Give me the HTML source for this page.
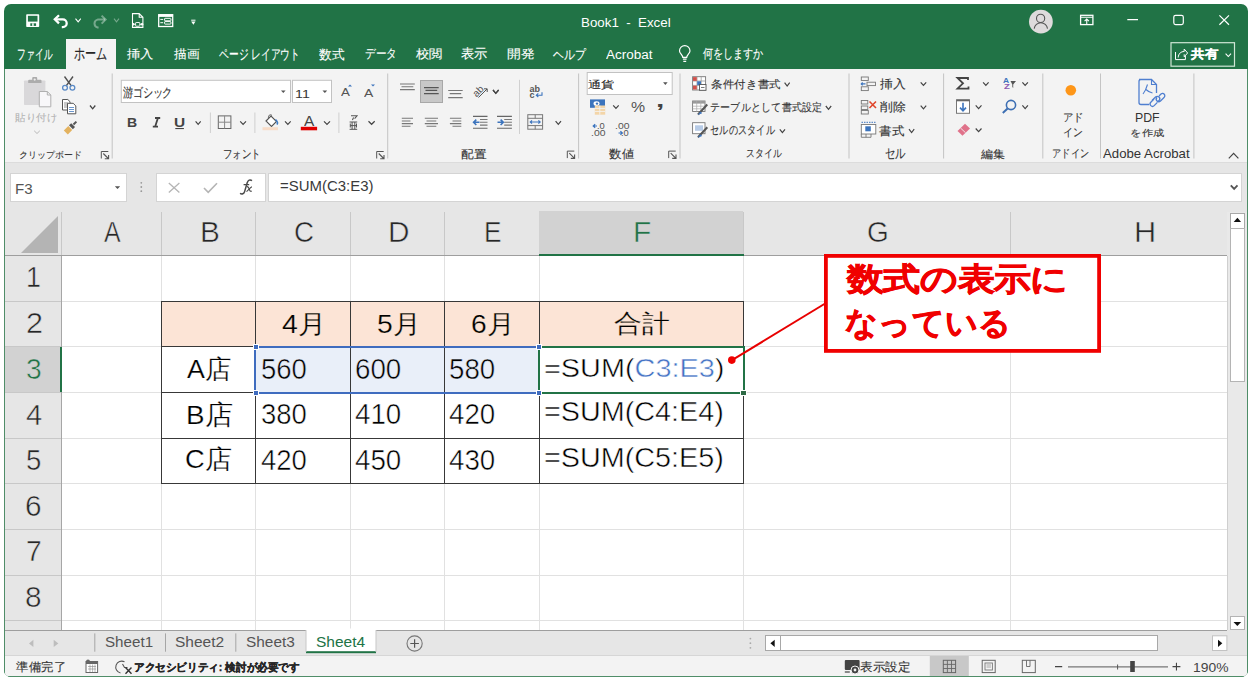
<!DOCTYPE html>
<html><head><meta charset="utf-8">
<style>
*{margin:0;padding:0;box-sizing:border-box}
html,body{width:1252px;height:682px;overflow:hidden;background:#fff;font-family:"Liberation Sans",sans-serif}
.a{position:absolute}
.t{position:absolute;white-space:nowrap;line-height:1}
#win{position:absolute;left:4px;top:4px;width:1244px;height:673px;border-radius:7px;overflow:hidden;background:#217346}
#c{position:absolute;left:-4px;top:-4px;width:1252px;height:682px}
svg{position:absolute;overflow:visible}
</style></head><body>
<div id="win"><div id="c">
<div class="t" style="left:581.47px;top:15.96px;font-size:13px;color:#fff;font-weight:400;transform:scale(1.0256,1.0222);transform-origin:0 0;">Book1&nbsp; -&nbsp; Excel</div>
<div class="a" style="left:66px;top:39px;width:50px;height:30px;background:#f3f3f3;"></div>
<div class="t" style="left:16.66px;top:47.02px;font-size:12px;color:#fff;font-weight:400;transform:scale(0.7362,1.1800);transform-origin:0 0;-webkit-text-stroke:0.12px #fff;">ファイル</div>
<div class="t" style="left:74.09px;top:45.58px;font-size:12px;color:#262626;font-weight:400;transform:scale(0.9118,1.3111);transform-origin:0 0;-webkit-text-stroke:0.12px #262626;">ホーム</div>
<div class="t" style="left:127.00px;top:48.20px;font-size:12px;color:#fff;font-weight:400;transform:scale(1.0870,0.9833);transform-origin:0 0;-webkit-text-stroke:0.12px #fff;">挿入</div>
<div class="t" style="left:174.00px;top:48.20px;font-size:12px;color:#fff;font-weight:400;transform:scale(1.0435,0.9833);transform-origin:0 0;-webkit-text-stroke:0.12px #fff;">描画</div>
<div class="t" style="left:219.18px;top:47.02px;font-size:12px;color:#fff;font-weight:400;transform:scale(0.8158,1.1800);transform-origin:0 0;-webkit-text-stroke:0.12px #fff;">ページ レイアウト</div>
<div class="t" style="left:319.00px;top:48.20px;font-size:12px;color:#fff;font-weight:400;transform:scale(1.0417,1.0727);transform-origin:0 0;-webkit-text-stroke:0.12px #fff;">数式</div>
<div class="t" style="left:365.12px;top:47.13px;font-size:12px;color:#fff;font-weight:400;transform:scale(0.8788,1.0727);transform-origin:0 0;-webkit-text-stroke:0.12px #fff;">データ</div>
<div class="t" style="left:416.00px;top:48.20px;font-size:12px;color:#fff;font-weight:400;transform:scale(1.0870,0.9833);transform-origin:0 0;-webkit-text-stroke:0.12px #fff;">校閲</div>
<div class="t" style="left:460.91px;top:47.13px;font-size:12px;color:#fff;font-weight:400;transform:scale(1.0870,1.0727);transform-origin:0 0;-webkit-text-stroke:0.12px #fff;">表示</div>
<div class="t" style="left:507.36px;top:48.20px;font-size:12px;color:#fff;font-weight:400;transform:scale(1.1364,0.9833);transform-origin:0 0;-webkit-text-stroke:0.12px #fff;">開発</div>
<div class="t" style="left:553.10px;top:48.20px;font-size:12px;color:#fff;font-weight:400;transform:scale(0.8971,1.0727);transform-origin:0 0;-webkit-text-stroke:0.12px #fff;">ヘルプ</div>
<div class="t" style="left:605.50px;top:48.60px;font-size:12px;color:#fff;font-weight:400;transform:scale(1.1244,1.0000);transform-origin:0 0;">Acrobat</div>
<div class="t" style="left:703.00px;top:47.13px;font-size:12px;color:#fff;font-weight:400;transform:scale(0.8333,1.0727);transform-origin:0 0;-webkit-text-stroke:0.12px #fff;">何をしますか</div>
<div class="a" style="left:5px;top:69px;width:1242px;height:93px;background:#f3f3f3;"></div>
<div class="a" style="left:5px;top:162px;width:1242px;height:468px;background:#e6e6e6;"></div>
<div class="a" style="left:5px;top:162px;width:1242px;height:1px;background:#dcdcdc;"></div>
<div class="a" style="left:10px;top:173px;width:117px;height:29px;background:#fff;border:1px solid #d4d4d4"></div>
<div class="a" style="left:156px;top:173px;width:110px;height:29px;background:#fff;border:1px solid #d4d4d4"></div>
<div class="a" style="left:268px;top:173px;width:974px;height:29px;background:#fff;border:1px solid #d4d4d4"></div>
<div class="t" style="left:15.12px;top:182.00px;font-size:14px;color:#555;font-weight:400;transform:scale(1.0800,1.0000);transform-origin:0 0;">F3</div>
<div class="t" style="left:280.13px;top:178.80px;font-size:14px;color:#3a3a3a;font-weight:400;transform:scale(1.0674,1.0000);transform-origin:0 0;">=SUM(C3:E3)</div>
<div class="a" style="left:62px;top:256px;width:1165px;height:374px;background:#fff;"></div>
<div class="a" style="left:161px;top:256px;width:1px;height:374px;background:#e1e1e1;"></div>
<div class="a" style="left:255px;top:256px;width:1px;height:374px;background:#e1e1e1;"></div>
<div class="a" style="left:350px;top:256px;width:1px;height:374px;background:#e1e1e1;"></div>
<div class="a" style="left:444px;top:256px;width:1px;height:374px;background:#e1e1e1;"></div>
<div class="a" style="left:539px;top:256px;width:1px;height:374px;background:#e1e1e1;"></div>
<div class="a" style="left:743px;top:256px;width:1px;height:374px;background:#e1e1e1;"></div>
<div class="a" style="left:1010px;top:256px;width:1px;height:374px;background:#e1e1e1;"></div>
<div class="a" style="left:62px;top:301px;width:1165px;height:1px;background:#e1e1e1;"></div>
<div class="a" style="left:62px;top:346px;width:1165px;height:1px;background:#e1e1e1;"></div>
<div class="a" style="left:62px;top:392px;width:1165px;height:1px;background:#e1e1e1;"></div>
<div class="a" style="left:62px;top:438px;width:1165px;height:1px;background:#e1e1e1;"></div>
<div class="a" style="left:62px;top:483px;width:1165px;height:1px;background:#e1e1e1;"></div>
<div class="a" style="left:62px;top:529px;width:1165px;height:1px;background:#e1e1e1;"></div>
<div class="a" style="left:62px;top:575px;width:1165px;height:1px;background:#e1e1e1;"></div>
<div class="a" style="left:62px;top:620px;width:1165px;height:1px;background:#e1e1e1;"></div>
<div class="a" style="left:5px;top:212px;width:1222px;height:44px;background:#e6e6e6;"></div>
<div class="a" style="left:5px;top:256px;width:56px;height:374px;background:#e6e6e6;"></div>
<div class="a" style="left:61px;top:212px;width:1px;height:43px;background:#c8c8c8;"></div>
<div class="a" style="left:61px;top:255px;width:1px;height:375px;background:#a6a6a6;"></div>
<div class="a" style="left:5px;top:255px;width:1222px;height:1px;background:#9e9e9e;"></div>
<div class="a" style="left:161px;top:212px;width:1px;height:43px;background:#c8c8c8;"></div>
<div class="a" style="left:255px;top:212px;width:1px;height:43px;background:#c8c8c8;"></div>
<div class="a" style="left:350px;top:212px;width:1px;height:43px;background:#c8c8c8;"></div>
<div class="a" style="left:444px;top:212px;width:1px;height:43px;background:#c8c8c8;"></div>
<div class="a" style="left:539px;top:212px;width:1px;height:43px;background:#c8c8c8;"></div>
<div class="a" style="left:743px;top:212px;width:1px;height:43px;background:#c8c8c8;"></div>
<div class="a" style="left:1010px;top:212px;width:1px;height:43px;background:#c8c8c8;"></div>
<div class="a" style="left:5px;top:301px;width:56px;height:1px;background:#c8c8c8;"></div>
<div class="a" style="left:5px;top:346px;width:56px;height:1px;background:#c8c8c8;"></div>
<div class="a" style="left:5px;top:392px;width:56px;height:1px;background:#c8c8c8;"></div>
<div class="a" style="left:5px;top:438px;width:56px;height:1px;background:#c8c8c8;"></div>
<div class="a" style="left:5px;top:483px;width:56px;height:1px;background:#c8c8c8;"></div>
<div class="a" style="left:5px;top:529px;width:56px;height:1px;background:#c8c8c8;"></div>
<div class="a" style="left:5px;top:575px;width:56px;height:1px;background:#c8c8c8;"></div>
<div class="a" style="left:5px;top:620px;width:56px;height:1px;background:#c8c8c8;"></div>
<svg style="left:0;top:0" width="1" height="1"><polygon points="21,253 58,216 58,253" fill="#b4b4b4"/></svg>
<div class="a" style="left:539px;top:211px;width:204px;height:44px;background:#d2d2d2;"></div>
<div class="a" style="left:539px;top:254px;width:205px;height:2px;background:#217346;"></div>
<div class="a" style="left:5px;top:347px;width:56px;height:45px;background:#d2d2d2;"></div>
<div class="a" style="left:60px;top:347px;width:2px;height:45px;background:#217346;"></div>
<div class="t" style="left:103.80px;top:218.35px;font-size:28px;color:#262626;font-weight:400;transform:scale(0.8895,1.0632);transform-origin:0 0;-webkit-text-stroke:0.5px #e6e6e6">A</div>
<div class="t" style="left:199.87px;top:218.35px;font-size:28px;color:#262626;font-weight:400;transform:scale(1.0667,1.0632);transform-origin:0 0;-webkit-text-stroke:0.5px #e6e6e6">B</div>
<div class="t" style="left:294.01px;top:218.35px;font-size:28px;color:#262626;font-weight:400;transform:scale(0.9889,1.0632);transform-origin:0 0;-webkit-text-stroke:0.5px #e6e6e6">C</div>
<div class="t" style="left:387.57px;top:218.35px;font-size:28px;color:#262626;font-weight:400;transform:scale(1.0647,1.0632);transform-origin:0 0;-webkit-text-stroke:0.5px #e6e6e6">D</div>
<div class="t" style="left:483.62px;top:218.35px;font-size:28px;color:#262626;font-weight:400;transform:scale(0.9375,1.0632);transform-origin:0 0;-webkit-text-stroke:0.5px #e6e6e6">E</div>
<div class="t" style="left:633.16px;top:218.35px;font-size:28px;color:#217346;font-weight:400;transform:scale(1.0714,1.0632);transform-origin:0 0;-webkit-text-stroke:0.5px #d2d2d2">F</div>
<div class="t" style="left:867.00px;top:218.35px;font-size:28px;color:#262626;font-weight:400;transform:scale(1.0000,1.0632);transform-origin:0 0;-webkit-text-stroke:0.5px #e6e6e6">G</div>
<div class="t" style="left:1133.80px;top:218.35px;font-size:28px;color:#262626;font-weight:400;transform:scale(1.1000,1.0632);transform-origin:0 0;-webkit-text-stroke:0.5px #e6e6e6">H</div>
<div class="t" style="left:26.28px;top:262.43px;font-size:28px;color:#262626;font-weight:400;transform:scale(0.9583,1.0789);transform-origin:0 0;-webkit-text-stroke:0.5px #e6e6e6">1</div>
<div class="t" style="left:25.81px;top:308.33px;font-size:28px;color:#262626;font-weight:400;transform:scale(1.0923,1.0789);transform-origin:0 0;-webkit-text-stroke:0.5px #e6e6e6">2</div>
<div class="t" style="left:25.89px;top:353.73px;font-size:28px;color:#217346;font-weight:400;transform:scale(1.0071,1.0789);transform-origin:0 0;-webkit-text-stroke:0.5px #d2d2d2">3</div>
<div class="t" style="left:25.86px;top:399.83px;font-size:28px;color:#262626;font-weight:400;transform:scale(1.0429,1.0789);transform-origin:0 0;-webkit-text-stroke:0.5px #e6e6e6">4</div>
<div class="t" style="left:25.91px;top:444.63px;font-size:28px;color:#262626;font-weight:400;transform:scale(0.9857,1.0789);transform-origin:0 0;-webkit-text-stroke:0.5px #e6e6e6">5</div>
<div class="t" style="left:25.34px;top:490.93px;font-size:28px;color:#262626;font-weight:400;transform:scale(1.0643,1.0789);transform-origin:0 0;-webkit-text-stroke:0.5px #e6e6e6">6</div>
<div class="t" style="left:26.09px;top:536.43px;font-size:28px;color:#262626;font-weight:400;transform:scale(1.0077,1.0789);transform-origin:0 0;-webkit-text-stroke:0.5px #e6e6e6">7</div>
<div class="t" style="left:25.34px;top:582.33px;font-size:28px;color:#262626;font-weight:400;transform:scale(1.0643,1.0789);transform-origin:0 0;-webkit-text-stroke:0.5px #e6e6e6">8</div>
<div class="a" style="left:162px;top:302px;width:581px;height:44px;background:#fce4d6;"></div>
<div class="a" style="left:256px;top:347px;width:283px;height:45px;background:#e9eff9;"></div>
<div class="a" style="left:161px;top:301px;width:1px;height:183px;background:#383838;"></div>
<div class="a" style="left:255px;top:301px;width:1px;height:183px;background:#383838;"></div>
<div class="a" style="left:350px;top:301px;width:1px;height:183px;background:#383838;"></div>
<div class="a" style="left:444px;top:301px;width:1px;height:183px;background:#383838;"></div>
<div class="a" style="left:539px;top:301px;width:1px;height:183px;background:#383838;"></div>
<div class="a" style="left:743px;top:301px;width:1px;height:183px;background:#383838;"></div>
<div class="a" style="left:161px;top:301px;width:583px;height:1px;background:#383838;"></div>
<div class="a" style="left:161px;top:346px;width:583px;height:1px;background:#383838;"></div>
<div class="a" style="left:161px;top:392px;width:583px;height:1px;background:#383838;"></div>
<div class="a" style="left:161px;top:438px;width:583px;height:1px;background:#383838;"></div>
<div class="a" style="left:161px;top:483px;width:583px;height:1px;background:#383838;"></div>
<div class="a" style="left:254px;top:346px;width:285px;height:2px;background:#3f6cbf;"></div>
<div class="a" style="left:254px;top:392px;width:285px;height:2px;background:#3f6cbf;"></div>
<div class="a" style="left:254px;top:346px;width:2px;height:48px;background:#3f6cbf;"></div>
<div class="a" style="left:538px;top:346px;width:206.5px;height:2px;background:#217346;"></div>
<div class="a" style="left:538px;top:392px;width:206.5px;height:2px;background:#217346;"></div>
<div class="a" style="left:538px;top:346px;width:2px;height:48px;background:#217346;"></div>
<div class="a" style="left:742.5px;top:346px;width:2px;height:48px;background:#217346;"></div>
<div class="a" style="left:254px;top:345px;width:4px;height:4px;background:#3f6cbf;outline:0.8px solid #fff"></div>
<div class="a" style="left:254px;top:390.5px;width:4px;height:4px;background:#3f6cbf;outline:0.8px solid #fff"></div>
<div class="a" style="left:537px;top:345px;width:4px;height:4px;background:#3f6cbf;outline:0.8px solid #fff"></div>
<div class="a" style="left:537px;top:390.5px;width:4px;height:4px;background:#3f6cbf;outline:0.8px solid #fff"></div>
<div class="a" style="left:741px;top:391px;width:4.5px;height:3.5px;background:#2d6a45;outline:0.8px solid #fff"></div>
<div class="t" style="left:281.98px;top:311.01px;font-size:28px;color:#000;font-weight:400;transform:scale(1.0189,0.9400);transform-origin:0 0;-webkit-text-stroke:0.25px #fce4d6">4月</div>
<div class="t" style="left:376.89px;top:311.01px;font-size:28px;color:#000;font-weight:400;transform:scale(1.0108,0.9400);transform-origin:0 0;-webkit-text-stroke:0.25px #fce4d6">5月</div>
<div class="t" style="left:471.29px;top:311.01px;font-size:28px;color:#000;font-weight:400;transform:scale(1.0054,0.9400);transform-origin:0 0;-webkit-text-stroke:0.25px #fce4d6">6月</div>
<div class="t" style="left:614.00px;top:310.90px;font-size:28px;color:#000;font-weight:400;transform:scale(1.0000,0.8963);transform-origin:0 0;-webkit-text-stroke:0.25px #fce4d6">合計</div>
<div class="t" style="left:187.20px;top:356.25px;font-size:28px;color:#000;font-weight:400;transform:scale(0.9587,0.9423);transform-origin:0 0;-webkit-text-stroke:0.25px #fff">A店</div>
<div class="t" style="left:185.51px;top:401.95px;font-size:28px;color:#000;font-weight:400;transform:scale(0.9955,0.9500);transform-origin:0 0;-webkit-text-stroke:0.25px #fff">B店</div>
<div class="t" style="left:185.42px;top:447.45px;font-size:28px;color:#000;font-weight:400;transform:scale(0.9761,0.9346);transform-origin:0 0;-webkit-text-stroke:0.25px #fff">C店</div>
<div class="t" style="left:260.82px;top:354.63px;font-size:28px;color:#000;font-weight:400;transform:scale(0.9822,1.0421);transform-origin:0 0;-webkit-text-stroke:0.5px #e9eff9">560</div>
<div class="t" style="left:354.81px;top:354.63px;font-size:28px;color:#000;font-weight:400;transform:scale(0.9911,1.0421);transform-origin:0 0;-webkit-text-stroke:0.5px #e9eff9">600</div>
<div class="t" style="left:449.31px;top:354.63px;font-size:28px;color:#000;font-weight:400;transform:scale(0.9889,1.0421);transform-origin:0 0;-webkit-text-stroke:0.5px #e9eff9">580</div>
<div class="t" style="left:260.82px;top:400.13px;font-size:28px;color:#000;font-weight:400;transform:scale(0.9822,1.0421);transform-origin:0 0;-webkit-text-stroke:0.5px #fff">380</div>
<div class="t" style="left:354.81px;top:400.13px;font-size:28px;color:#000;font-weight:400;transform:scale(0.9911,1.0421);transform-origin:0 0;-webkit-text-stroke:0.5px #fff">410</div>
<div class="t" style="left:449.31px;top:400.13px;font-size:28px;color:#000;font-weight:400;transform:scale(0.9889,1.0421);transform-origin:0 0;-webkit-text-stroke:0.5px #fff">420</div>
<div class="t" style="left:260.82px;top:445.63px;font-size:28px;color:#000;font-weight:400;transform:scale(0.9822,1.0421);transform-origin:0 0;-webkit-text-stroke:0.5px #fff">420</div>
<div class="t" style="left:354.81px;top:445.63px;font-size:28px;color:#000;font-weight:400;transform:scale(0.9911,1.0421);transform-origin:0 0;-webkit-text-stroke:0.5px #fff">450</div>
<div class="t" style="left:449.31px;top:445.63px;font-size:28px;color:#000;font-weight:400;transform:scale(0.9889,1.0421);transform-origin:0 0;-webkit-text-stroke:0.5px #fff">430</div>
<div class="t" style="left:544.47px;top:356.16px;font-size:28px;color:#000;font-weight:400;transform:scale(1.0301,0.8962);transform-origin:0 0;-webkit-text-stroke:0.5px #fff">=SUM(<span style="color:#4472c4">C3:E3</span>)</div>
<div class="t" style="left:544.47px;top:398.35px;font-size:28px;color:#000;font-weight:400;transform:scale(1.0272,1.0154);transform-origin:0 0;-webkit-text-stroke:0.5px #fff">=SUM(C4:E4)</div>
<div class="t" style="left:544.47px;top:443.95px;font-size:28px;color:#000;font-weight:400;transform:scale(1.0272,1.0154);transform-origin:0 0;-webkit-text-stroke:0.5px #fff">=SUM(C5:E5)</div>
<svg style="left:0;top:0" width="1" height="1"><line x1="826" y1="303" x2="732" y2="360.2" stroke="#e80000" stroke-width="2"/><circle cx="731.8" cy="360.1" r="3.8" fill="#f00000"/></svg>
<svg style="left:0;top:0" width="1252" height="682"><rect x="825.9" y="255.9" width="273.2" height="95" fill="#fff" stroke="#f00000" stroke-width="3.8"/></svg>
<div class="t" style="left:846.50px;top:263.95px;font-size:30px;color:#f00000;font-weight:700;transform:scale(1.2151,1.0500);transform-origin:0 0;-webkit-text-stroke:0.6px #f00000">数式の表示に</div>
<div class="t" style="left:845.43px;top:306.56px;font-size:30px;color:#f00000;font-weight:700;transform:scale(1.0733,1.0690);transform-origin:0 0;-webkit-text-stroke:0.6px #f00000">なっている</div>
<div class="a" style="left:1227px;top:212px;width:20px;height:418px;background:#e9e9e9;"></div>
<div class="a" style="left:1229.5px;top:213px;width:15.2px;height:15.5px;background:#fff;border:1px solid #a8a8a8"></div>
<div class="a" style="left:1229.5px;top:227.5px;width:15.2px;height:154.5px;background:#fff;border:1px solid #b4b4b4"></div>
<div class="a" style="left:1229.5px;top:615.7px;width:15.2px;height:14.8px;background:#fff;border:1px solid #b4b4b4"></div>
<div class="a" style="left:5px;top:630px;width:1242px;height:25px;background:#e6e6e6;"></div>
<div class="a" style="left:5px;top:630px;width:1222px;height:1px;background:#9e9e9e;"></div>
<div class="a" style="left:5px;top:655px;width:1242px;height:21px;background:#f3f3f3;"></div>
<div class="a" style="left:5px;top:655px;width:1242px;height:1px;background:#d6d6d6;"></div>
<svg style="left:0;top:0" width="1252" height="682"><rect x="26.2" y="14.2" width="13" height="12.8" rx="0.8" fill="#fff"/><rect x="27.9" y="15.8" width="9.6" height="5.8" fill="#217346"/><rect x="30.3" y="23.3" width="5.8" height="2.6" fill="#217346"/><rect x="32.2" y="23.3" width="1.5" height="2.6" fill="#fff"/><path d="M55.4 19.3 H62.8 A3.9 3.9 0 0 1 62.8 27.1 H61.8" fill="none" stroke="#fff" stroke-width="2.3"/><path d="M59 15.2 L54.8 19.3 L59 23.4" fill="none" stroke="#fff" stroke-width="2.3"/><polyline points="75.5,18.6 78.15,21.8 80.8,18.6" fill="none" stroke="#fff" stroke-width="1.1"/><path d="M105 19.6 H97.6 A4 4 0 0 0 97.6 27.4 H98.6" fill="none" stroke="rgba(255,255,255,0.38)" stroke-width="2"/><path d="M101.6 15.6 L105.6 19.6 L101.6 23.6" fill="none" stroke="rgba(255,255,255,0.38)" stroke-width="2"/><polyline points="114,18.6 116.5,21.8 119,18.6" fill="none" stroke="rgba(255,255,255,0.38)" stroke-width="1.1"/><path d="M132.5 27.4 V13.6 H139.2 L142.9 17.3 V27.4 Z M139.2 13.6 V17.3 H142.9" fill="none" stroke="#fff" stroke-width="1.1"/><circle cx="133.4" cy="24.3" r="1.25" fill="#fff"/><circle cx="142" cy="24.3" r="1.25" fill="#fff"/><path d="M134.5 24.3 H135.6 M139.8 24.3 H141" stroke="#fff" stroke-width="0.9"/><rect x="135.6" y="22.5" width="4.2" height="3.7" rx="0.6" fill="none" stroke="#fff" stroke-width="0.9"/><rect x="158.7" y="14.7" width="14" height="11.8" fill="none" stroke="#fff" stroke-width="1.3"/><rect x="158.7" y="14.5" width="14" height="2.4" fill="#fff"/><path d="M160.3 19.4 H163.2 M160.3 22.7 H163.2" stroke="#fff" stroke-width="1"/><rect x="164.6" y="18.3" width="6.3" height="2.5" rx="0.5" fill="none" stroke="#fff" stroke-width="1"/><rect x="164.6" y="21.6" width="6.3" height="2.5" rx="0.5" fill="none" stroke="#fff" stroke-width="1"/><path d="M191.2 20.2 H195.5" stroke="#fff" stroke-width="1"/><polygon points="191.2,21.6 195.5,21.6 193.35,24.8" fill="#fff"/><circle cx="1040.9" cy="21.7" r="11.9" fill="#dedbdc"/><circle cx="1040.6" cy="18.4" r="4.1" fill="none" stroke="#555" stroke-width="1.1"/><path d="M1034.2 28.6 A6.7 6.7 0 0 1 1047.5 28.6" fill="none" stroke="#555" stroke-width="1.1"/><rect x="1080.6" y="15.3" width="12.3" height="9.3" fill="none" stroke="#fff" stroke-width="1.3"/><path d="M1080.6 17.3 H1092.9" stroke="#fff" stroke-width="1.1"/><path d="M1086.75 19 V24.6 M1084.6 21.1 L1086.75 19 L1088.9 21.1" fill="none" stroke="#fff" stroke-width="1.1"/><path d="M1127.3 19.6 H1138" stroke="#fff" stroke-width="1.2"/><rect x="1173.8" y="15.3" width="9.5" height="9.3" rx="1.8" fill="none" stroke="#fff" stroke-width="1.2"/><path d="M1219.4 15.4 L1229 24.8 M1229 15.4 L1219.4 24.8" stroke="#fff" stroke-width="1.2"/><rect x="1171" y="42.7" width="63.5" height="23.5" fill="none" stroke="#d0e6d6" stroke-width="1.2"/><path d="M1175.5 52 V59.6 H1185.4 V56" fill="none" stroke="#fff" stroke-width="1"/><path d="M1178.2 57.5 C1178.5 53.5 1181 51.5 1184.2 51.5 V49 L1187.6 53 L1184.2 56.8 V54.3" fill="none" stroke="#fff" stroke-width="1"/><polyline points="1225.6,53.6 1228.3,56.5 1231,53.6" fill="none" stroke="#fff" stroke-width="1.1"/></svg>
<div class="t" style="left:1191.40px;top:48.35px;font-size:13px;color:#fff;font-weight:700;transform:scale(1.0577,0.9462);transform-origin:0 0;-webkit-text-stroke:0.3px #fff">共有</div>
<svg style="left:0;top:0" width="1252" height="682"><rect x="111.7" y="73.5" width="1" height="85" fill="#c4c4c4"/><rect x="387.2" y="73.5" width="1" height="85" fill="#c4c4c4"/><rect x="578.1" y="73.5" width="1" height="85" fill="#c4c4c4"/><rect x="679.5" y="73.5" width="1" height="85" fill="#c4c4c4"/><rect x="848.5" y="73.5" width="1" height="85" fill="#c4c4c4"/><rect x="943.1" y="73.5" width="1" height="85" fill="#c4c4c4"/><rect x="1042.3" y="73.5" width="1" height="85" fill="#c4c4c4"/><rect x="1100.0" y="73.5" width="1" height="85" fill="#c4c4c4"/><rect x="1193.4" y="73.5" width="1" height="85" fill="#c4c4c4"/><rect x="209.9" y="112.5" width="1" height="20.5" fill="#d0d0d0"/><rect x="254.4" y="112.5" width="1" height="20.5" fill="#d0d0d0"/><rect x="338.4" y="112.5" width="1" height="20.5" fill="#d0d0d0"/><rect x="519" y="79.8" width="1" height="54.2" fill="#d0d0d0"/><path d="M101.3 158.5 V151.5 H108.3" fill="none" stroke="#555" stroke-width="1"/><path d="M103.3 153.5 L108.3 158.5 M108.6 155 V158.8 H104.8" fill="none" stroke="#555" stroke-width="1.1"/><path d="M376.7 158.5 V151.5 H383.7" fill="none" stroke="#555" stroke-width="1"/><path d="M378.7 153.5 L383.7 158.5 M384.0 155 V158.8 H380.2" fill="none" stroke="#555" stroke-width="1.1"/><path d="M567.3 158.1 V151.1 H574.3" fill="none" stroke="#555" stroke-width="1"/><path d="M569.3 153.1 L574.3 158.1 M574.5999999999999 154.6 V158.4 H570.8" fill="none" stroke="#555" stroke-width="1.1"/><path d="M668.7 158.1 V151.1 H675.7" fill="none" stroke="#555" stroke-width="1"/><path d="M670.7 153.1 L675.7 158.1 M676.0 154.6 V158.4 H672.2" fill="none" stroke="#555" stroke-width="1.1"/><rect x="24" y="80.5" width="21.4" height="24.5" rx="0.8" fill="#d9d8da"/><path d="M28.2 83 V80.8 Q28.2 79.8 29.2 79.8 H32.2 V78 Q32.2 77 33.2 77 H36.2 Q37.2 77 37.2 78 V79.8 H40.5 Q41.5 79.8 41.5 80.8 V83 Z" fill="#acacac"/><circle cx="34.7" cy="79.6" r="1.1" fill="#eee"/><path d="M39.3 91.5 H47.3 L50.8 95 V106.8 H39.3 Z" fill="#f8f7f9" stroke="#b0b0b0" stroke-width="1"/><path d="M47.3 91.5 V95 H50.8" fill="none" stroke="#b0b0b0" stroke-width="1"/><polyline points="34.2,130.8 37.0,133.5 39.8,130.8" fill="none" stroke="#b8b8b8" stroke-width="1"/><path d="M64.5 76.5 L71.5 86.2 M73 76.5 L66 86.2" stroke="#505050" stroke-width="1.4" fill="none"/><circle cx="65" cy="87.8" r="2.4" fill="none" stroke="#5a8ac6" stroke-width="1.3"/><circle cx="72.4" cy="87.8" r="2.4" fill="none" stroke="#5a8ac6" stroke-width="1.3"/><path d="M62.5 99.5 H67.8 L70 101.7 V110 H62.5 Z" fill="#fff" stroke="#555" stroke-width="1"/><path d="M64 103 H68 M64 105 H68 M64 107 H68" stroke="#777" stroke-width="0.8"/><path d="M67.5 103.3 H73.2 L75.8 105.9 V113.8 H67.5 Z" fill="#fff" stroke="#555" stroke-width="1"/><path d="M69 107.5 H74 M69 109.5 H74 M69 111.5 H74" stroke="#5a8ac6" stroke-width="0.9"/><polyline points="90,105.5 92.65,108.8 95.3,105.5" fill="none" stroke="#444" stroke-width="1.3"/><path d="M63.8 130.5 L68.3 126 L72.2 130 L67.8 134.6 Z" fill="#e3b25f"/><path d="M69 125.3 L71.2 123.2 L75 127 L72.9 129.2 Z" fill="#555"/><path d="M73.5 124.5 L76.4 121.6" stroke="#555" stroke-width="2"/><rect x="121.3" y="80.3" width="169.2" height="22.2" fill="#fff" stroke="#c2c2c2" stroke-width="1"/><rect x="292.5" y="80.3" width="39" height="22.2" fill="#fff" stroke="#c2c2c2" stroke-width="1"/><polygon points="281,90.4 285.6,90.4 283.3,93.1" fill="#555"/><polygon points="322.5,90.4 327.2,90.4 324.85,93.1" fill="#555"/><polyline points="195.6,121.3 198.14999999999998,124.3 200.7,121.3" fill="none" stroke="#444" stroke-width="1.2"/><rect x="218.3" y="115.9" width="12.6" height="12.6" fill="none" stroke="#666" stroke-width="1"/><path d="M224.6 115.9 V128.5 M218.3 122.2 H230.9" stroke="#888" stroke-width="1"/><polyline points="240.2,121.3 243.1,124.3 246,121.3" fill="none" stroke="#444" stroke-width="1.2"/><path d="M266 121 L271 116 L276.5 121.5 L271.5 126.5 Z" fill="#fff" stroke="#555" stroke-width="1.1"/><path d="M268.5 118.5 C268 115.5 270 113.8 272 115.5" fill="none" stroke="#555" stroke-width="1"/><path d="M275.5 119.5 C277.8 121.5 278 123.5 276.8 124.5" fill="none" stroke="#3d7cc6" stroke-width="1.6"/><rect x="262.5" y="127.2" width="15.5" height="3" fill="#f8dcc8"/><polyline points="285,121.3 287.85,124.3 290.7,121.3" fill="none" stroke="#444" stroke-width="1.2"/><rect x="300.8" y="126.8" width="16.3" height="3.5" fill="#e00000"/><polyline points="324,121.3 327.0,124.3 330,121.3" fill="none" stroke="#444" stroke-width="1.2"/><polyline points="368.5,121.3 371.6,124.3 374.7,121.3" fill="none" stroke="#444" stroke-width="1.2"/><path d="M400 84 H414.8" stroke="#777" stroke-width="1.1"/><path d="M401.5 86.8 H413.3" stroke="#777" stroke-width="1.1"/><path d="M400 89.6 H414.8" stroke="#777" stroke-width="1.1"/><rect x="420.5" y="80.5" width="22" height="22" fill="#c8c8c8" stroke="#a8a8a8" stroke-width="1"/><path d="M424 87.6 H438.7" stroke="#555" stroke-width="1.1"/><path d="M425.5 90.4 H437.2" stroke="#555" stroke-width="1.1"/><path d="M424 93.6 H438.7" stroke="#555" stroke-width="1.1"/><path d="M448.2 90.5 H462.7" stroke="#777" stroke-width="1.1"/><path d="M449.7 93.6 H461.2" stroke="#777" stroke-width="1.1"/><path d="M448.2 97.6 H462.7" stroke="#777" stroke-width="1.1"/><text x="0" y="0" transform="translate(476.5 97.5) rotate(-45)" font-family="Liberation Sans" font-size="10" fill="#555">ab</text><path d="M478.5 97.5 L487 89 M484 88.8 H487.2 V92" fill="none" stroke="#555" stroke-width="1"/><polyline points="493,90 495.8,93.4 498.6,90" fill="none" stroke="#444" stroke-width="1.2"/><path d="M401.8 118.2 H413" stroke="#777" stroke-width="1.1"/><path d="M401.8 121 H410.5" stroke="#777" stroke-width="1.1"/><path d="M401.8 123.6 H413" stroke="#777" stroke-width="1.1"/><path d="M401.8 126.3 H410.5" stroke="#777" stroke-width="1.1"/><path d="M424.8 118.2 H438" stroke="#777" stroke-width="1.1"/><path d="M426.5 121 H436.3" stroke="#777" stroke-width="1.1"/><path d="M424.8 123.6 H438" stroke="#777" stroke-width="1.1"/><path d="M426.5 126.3 H436.3" stroke="#777" stroke-width="1.1"/><path d="M449.9 118.2 H461.3" stroke="#777" stroke-width="1.1"/><path d="M452.5 121 H461.3" stroke="#777" stroke-width="1.1"/><path d="M449.9 123.6 H461.3" stroke="#777" stroke-width="1.1"/><path d="M452.5 126.3 H461.3" stroke="#777" stroke-width="1.1"/><path d="M473 116.4 H487.5" stroke="#666" stroke-width="1.1"/><path d="M473 128.2 H487.5" stroke="#666" stroke-width="1.1"/><path d="M480 119.5 H487.5" stroke="#777" stroke-width="1.1"/><path d="M480 122.3 H487.5" stroke="#777" stroke-width="1.1"/><path d="M480 125.1 H487.5" stroke="#777" stroke-width="1.1"/><path d="M479.5 122.3 H473.8 M476.3 119.6 L473.6 122.3 L476.3 125" fill="none" stroke="#3c74bd" stroke-width="1.6"/><path d="M497 116.4 H511.9" stroke="#666" stroke-width="1.1"/><path d="M497 128.2 H511.9" stroke="#666" stroke-width="1.1"/><path d="M504.2 119.5 H511.9" stroke="#777" stroke-width="1.1"/><path d="M504.2 122.3 H511.9" stroke="#777" stroke-width="1.1"/><path d="M504.2 125.1 H511.9" stroke="#777" stroke-width="1.1"/><path d="M497.5 122.3 H503.2 M500.6 119.6 L503.3 122.3 L500.6 125" fill="none" stroke="#3c74bd" stroke-width="1.6"/><polyline points="493,90 495.8,93.4 498.6,90" fill="none" stroke="#444" stroke-width="1.2"/><text x="529.6" y="91.5" font-family="Liberation Sans" font-size="9" font-weight="700" fill="#555">ab</text><text x="529.6" y="98.4" font-family="Liberation Sans" font-size="9" font-weight="700" fill="#555">c</text><path d="M542 92.2 V95.2 H536.5 M538.3 93.4 L536.3 95.2 L538.3 97" fill="none" stroke="#3c74bd" stroke-width="1.1"/><rect x="527.8" y="114.7" width="14.8" height="14.5" fill="none" stroke="#777" stroke-width="1"/><path d="M527.8 118.3 H542.6 M527.8 125.6 H542.6 M535.2 114.7 V118.3 M535.2 125.6 V129.2" stroke="#777" stroke-width="1"/><path d="M530.2 122 H540.2 M532 120.3 L530.2 122 L532 123.7 M538.4 120.3 L540.2 122 L538.4 123.7" fill="none" stroke="#3c74bd" stroke-width="1.1"/><polyline points="555.6,121.2 558.3,124.4 561,121.2" fill="none" stroke="#444" stroke-width="1.2"/><rect x="587.2" y="72.5" width="85" height="22" fill="#fff" stroke="#c2c2c2" stroke-width="1"/><polygon points="663.1,82.2 667.6,82.2 665.35,85" fill="#555"/><rect x="590" y="99.4" width="15" height="8.4" fill="#3c74bd"/><ellipse cx="596.5" cy="103.6" rx="3" ry="2.3" fill="#fff"/><circle cx="597" cy="103.6" r="1.2" fill="#3c74bd"/><rect x="594.8" y="105.5" width="10.4" height="9.2" fill="#f3d5a8"/><path d="M594.8 108.4 H605.2 M594.8 111.4 H605.2 M599.8 105.5 V114.7" stroke="#f3f3f3" stroke-width="0.9"/><polyline points="613.2,105.3 615.95,108.4 618.7,105.3" fill="none" stroke="#444" stroke-width="1.2"/><path d="M594 126 H597 M595.2 124.2 L593.2 126 L595.2 127.8" fill="none" stroke="#3c74bd" stroke-width="1.2"/><path d="M618.5 133 H621.8 M620.4 131.2 L622.4 133 L620.4 134.8" fill="none" stroke="#3c74bd" stroke-width="1.2"/><rect x="692.6" y="76.7" width="13" height="13.3" fill="#fff" stroke="#777" stroke-width="0.9"/><path d="M692.6 81 H705.6 M692.6 85.4 H705.6 M697 76.7 V90 M701.2 76.7 V90" stroke="#999" stroke-width="0.8"/><rect x="693" y="77.1" width="3.8" height="3.8" fill="#d2504a"/><rect x="697.2" y="81.3" width="3.8" height="3.8" fill="#3c74bd"/><rect x="693" y="85.7" width="3.8" height="3.8" fill="#d2504a"/><rect x="699.5" y="84.5" width="6.5" height="5.8" fill="#fff" stroke="#555" stroke-width="0.9"/><path d="M701 87.5 H704.5" stroke="#555" stroke-width="0.8"/><polyline points="784.6,82.7 787.1500000000001,86 789.7,82.7" fill="none" stroke="#444" stroke-width="1.2"/><rect x="692.6" y="101" width="12.4" height="10.5" fill="#fff" stroke="#777" stroke-width="0.9"/><rect x="692.6" y="101" width="12.4" height="2.6" fill="#9a9a9a"/><path d="M692.6 106.2 H705 M692.6 108.8 H705 M696.7 101 V111.5 M700.8 101 V111.5" stroke="#aaa" stroke-width="0.7"/><path d="M698 114.5 L707.3 104.5" stroke="#555" stroke-width="2"/><path d="M697.5 115 L700.5 111.6 L702.2 113.2 Z" fill="#3c74bd"/><polyline points="825.8,106 828.5,109.3 831.2,106" fill="none" stroke="#444" stroke-width="1.2"/><rect x="692.6" y="122.7" width="12.4" height="11" fill="#fff" stroke="#777" stroke-width="0.9"/><rect x="695" y="125.3" width="8" height="5.5" fill="#b7cbe6"/><path d="M698 137.2 L707.3 127.2" stroke="#555" stroke-width="2"/><path d="M697.5 137.7 L700.5 134.3 L702.2 135.9 Z" fill="#3c74bd"/><polyline points="779.8,129.3 782.4,132.6 785,129.3" fill="none" stroke="#444" stroke-width="1.2"/><rect x="861.3" y="77" width="7" height="3.5" fill="none" stroke="#777" stroke-width="0.9"/><rect x="867" y="82.2" width="8.5" height="3.4" fill="none" stroke="#777" stroke-width="0.9"/><rect x="861.3" y="86.8" width="7" height="3.8" fill="none" stroke="#777" stroke-width="0.9"/><path d="M861.3 83.9 H865.5 M862.6 82.4 L861.2 83.9 L862.6 85.4" fill="none" stroke="#3c74bd" stroke-width="1.1"/><polyline points="920.7,82.3 923.45,85.4 926.2,82.3" fill="none" stroke="#444" stroke-width="1.2"/><rect x="861.3" y="100.5" width="6.5" height="3.5" fill="none" stroke="#777" stroke-width="0.9"/><rect x="861.3" y="106" width="6.5" height="3.5" fill="none" stroke="#777" stroke-width="0.9"/><rect x="861.3" y="110.5" width="7" height="3.5" fill="none" stroke="#777" stroke-width="0.9"/><path d="M869.5 101.5 L876 108 M876 101.5 L869.5 108" stroke="#e0452b" stroke-width="1.6"/><polyline points="920.7,105.7 923.45,108.8 926.2,105.7" fill="none" stroke="#444" stroke-width="1.2"/><path d="M861.5 122.3 H875.8" stroke="#3c74bd" stroke-width="1" stroke-dasharray="1.5 1"/><rect x="861.3" y="124.5" width="14.5" height="9.5" fill="#fff" stroke="#777" stroke-width="0.9"/><rect x="865.3" y="126.3" width="5.5" height="5" fill="#3c74bd"/><path d="M861.3 134 V137.3 H866 V134 M866 137.3 H871 V134" fill="none" stroke="#777" stroke-width="0.9"/><polyline points="909,129.2 911.6,132.5 914.2,129.2" fill="none" stroke="#444" stroke-width="1.2"/><path d="M968 80 V78 H957.5 L963 83.3 L957.5 88.7 H968.5 V86.5" fill="none" stroke="#444" stroke-width="1.8"/><polyline points="983.1,82.3 985.85,85.4 988.6,82.3" fill="none" stroke="#444" stroke-width="1.2"/><path d="M1010.5 81 H1016 L1013.2 84.5 V88 L1012.3 87 V84.5 Z" fill="#555"/><polyline points="1022.4,82.3 1025.15,85.4 1027.9,82.3" fill="none" stroke="#444" stroke-width="1.2"/><rect x="956.5" y="99.8" width="13" height="13.5" fill="#fff" stroke="#777" stroke-width="1"/><rect x="956.5" y="99.5" width="13" height="1.8" fill="#666"/><path d="M963 102.8 V110.8 M960 107.6 L963 110.8 L966 107.6" fill="none" stroke="#3c74bd" stroke-width="1.6"/><polyline points="975.7,105.4 978.6,108.6 981.5,105.4" fill="none" stroke="#444" stroke-width="1.2"/><circle cx="1011" cy="105" r="4.6" fill="none" stroke="#3d6fb3" stroke-width="1.6"/><path d="M1007.6 108.5 L1002.8 113" stroke="#3d6fb3" stroke-width="2"/><polyline points="1022.4,105.4 1025.15,108.6 1027.9,105.4" fill="none" stroke="#444" stroke-width="1.2"/><path d="M957.5 131 L965 123.8 L970 128.5 L962.5 135.8 Z" fill="#e0728a"/><path d="M960.5 128 L965.5 132.7" stroke="#f3f3f3" stroke-width="0.9"/><polyline points="975.7,128.5 978.6,131.6 981.5,128.5" fill="none" stroke="#444" stroke-width="1.2"/><circle cx="1070.8" cy="90.2" r="5.3" fill="#ff8c00" fill-opacity="0.9"/><path d="M1139 79.5 H1151.5 L1156.5 84.5 V93 M1149 104.5 H1141 A2 2 0 0 1 1139 102.5 V81.5 A2 2 0 0 1 1141 79.5" fill="none" stroke="#4f7fd0" stroke-width="1.3"/><path d="M1151.5 79.5 V84.5 H1156.5" fill="none" stroke="#4f7fd0" stroke-width="1.1"/><path d="M1147.5 84.5 C1146.5 88 1145.5 91 1143 94 M1146 89.5 C1148 91.5 1150 92.5 1152.5 93" fill="none" stroke="#4f7fd0" stroke-width="1.1"/><path d="M1152 100.5 L1155.5 97 A2.3 2.3 0 0 1 1159 100.5 L1157.5 102 M1159 96 L1161 94 A2.3 2.3 0 0 1 1164 97.5 L1160.5 101 A2.3 2.3 0 0 1 1157 97.5" fill="none" stroke="#4f7fd0" stroke-width="1.3"/><path d="M1154 99 L1150.8 102.2 A2.3 2.3 0 0 0 1154.2 105.6 L1157.4 102.4" fill="none" stroke="#4f7fd0" stroke-width="1.3"/><polyline points="1228.8,158.3 1233.6,153.3 1238.4,158.3" fill="none" stroke="#444" stroke-width="1.2"/></svg>
<div class="t" style="left:15.01px;top:112.05px;font-size:12px;color:#b3b3b3;font-weight:400;transform:scale(0.8911,0.8583);transform-origin:0 0;-webkit-text-stroke:0.12px #b3b3b3;">貼り付け</div>
<div class="t" style="left:18.81px;top:149.50px;font-size:12px;color:#333;font-weight:400;transform:scale(0.7438,0.7500);transform-origin:0 0;-webkit-text-stroke:0.12px #333;">クリップボード</div>
<div class="t" style="left:223.21px;top:147.50px;font-size:12px;color:#333;font-weight:400;transform:scale(0.7864,1.0000);transform-origin:0 0;-webkit-text-stroke:0.12px #333;">フォント</div>
<div class="t" style="left:461.31px;top:148.80px;font-size:12px;color:#333;font-weight:400;transform:scale(1.0909,0.9455);transform-origin:0 0;-webkit-text-stroke:0.12px #333;">配置</div>
<div class="t" style="left:608.60px;top:147.76px;font-size:12px;color:#333;font-weight:400;transform:scale(1.0696,1.0400);transform-origin:0 0;-webkit-text-stroke:0.12px #333;">数値</div>
<div class="t" style="left:745.54px;top:147.85px;font-size:12px;color:#333;font-weight:400;transform:scale(0.7596,0.9455);transform-origin:0 0;-webkit-text-stroke:0.12px #333;">スタイル</div>
<div class="t" style="left:884.54px;top:146.49px;font-size:12px;color:#333;font-weight:400;transform:scale(0.8609,1.1556);transform-origin:0 0;-webkit-text-stroke:0.12px #333;">セル</div>
<div class="t" style="left:980.50px;top:148.80px;font-size:12px;color:#333;font-weight:400;transform:scale(1.0304,0.9455);transform-origin:0 0;-webkit-text-stroke:0.12px #333;">編集</div>
<div class="t" style="left:1052.22px;top:148.42px;font-size:12px;color:#333;font-weight:400;transform:scale(0.7783,0.9300);transform-origin:0 0;-webkit-text-stroke:0.12px #333;">アドイン</div>
<div class="t" style="left:1103.40px;top:148.32px;font-size:12px;color:#333;font-weight:400;transform:scale(1.1000,1.0333);transform-origin:0 0;">Adobe Acrobat</div>
<div class="t" style="left:123.40px;top:86.40px;font-size:12px;color:#333;font-weight:400;transform:scale(0.8207,1.0500);transform-origin:0 0;-webkit-text-stroke:0.12px #333;">游ゴシック</div>
<div class="t" style="left:294.51px;top:87.64px;font-size:12px;color:#333;font-weight:400;transform:scale(1.1909,0.9556);transform-origin:0 0;">11</div>
<div class="t" style="left:341.30px;top:86.22px;font-size:12px;color:#555;font-weight:400;transform:scale(1.1125,0.9778);transform-origin:0 0;">A</div>
<div class="t" style="left:364.30px;top:86.62px;font-size:12px;color:#555;font-weight:400;transform:scale(1.1625,0.9778);transform-origin:0 0;">A</div>
<div class="t" style="left:126.83px;top:116.25px;font-size:12px;color:#444;font-weight:700;transform:scale(1.1714,1.1000);transform-origin:0 0;">B</div>
<svg style="left:0;top:0" width="1252" height="682"><path d="M155 118 H160.2 M152.8 126.6 H158 M157.9 118 L155.2 126.6" fill="none" stroke="#444" stroke-width="1.8"/><rect x="175.3" y="128" width="8.6" height="1.1" fill="#444"/></svg>
<div class="t" style="left:174.31px;top:116.23px;font-size:12px;color:#444;font-weight:700;transform:scale(1.2857,1.0667);transform-origin:0 0;">U</div>
<div class="t" style="left:304.30px;top:113.09px;font-size:13px;color:#444;font-weight:400;transform:scale(1.1889,1.1556);transform-origin:0 0;">A</div>
<svg style="left:0;top:0" width="1252" height="682"><path d="M351 115.8 H357 L354.6 118.6 M353.6 117.6 L352.4 120" fill="none" stroke="#555" stroke-width="1.1"/><path d="M349.6 122 H357.2 M349.6 129.3 H357.2 M352.1 122 V129.3 M354.8 122 V129.3 M350.3 125.6 H356.5 M350.3 123.5 V127.5 M356.5 123.5 V127.5" fill="none" stroke="#555" stroke-width="1"/><path d="M348 86.4 L350 84.5 L352 86.4 Z M371 84.6 L373 86.5 L375 84.6 Z" fill="#3c74bd"/></svg>
<div class="t" style="left:587.93px;top:79.80px;font-size:12px;color:#262626;font-weight:400;transform:scale(1.0739,0.8167);transform-origin:0 0;-webkit-text-stroke:0.12px #262626;">通貨</div>
<div class="t" style="left:630.80px;top:99.25px;font-size:14px;color:#555;font-weight:400;transform:scale(1.1333,1.0500);transform-origin:0 0;">%</div>
<div class="t" style="left:656.43px;top:90.85px;font-size:16px;color:#444;font-weight:700;transform:scale(1.8667,1.2600);transform-origin:0 0;">,</div>
<div class="t" style="left:596.83px;top:122.34px;font-size:8px;color:#555;font-weight:400;transform:scale(1.1667,1.1600);transform-origin:0 0;">.0</div>
<div class="t" style="left:590.70px;top:129.24px;font-size:8px;color:#555;font-weight:400;transform:scale(1.3000,1.1600);transform-origin:0 0;">.00</div>
<div class="t" style="left:614.70px;top:122.34px;font-size:8px;color:#555;font-weight:400;transform:scale(1.3000,1.1600);transform-origin:0 0;">.00</div>
<div class="t" style="left:620.83px;top:129.24px;font-size:8px;color:#555;font-weight:400;transform:scale(1.1667,1.1600);transform-origin:0 0;">.0</div>
<div class="t" style="left:710.80px;top:79.10px;font-size:12px;color:#333;font-weight:400;transform:scale(0.9708,0.9333);transform-origin:0 0;-webkit-text-stroke:0.12px #333;">条件付き書式</div>
<div class="t" style="left:709.95px;top:102.05px;font-size:12px;color:#333;font-weight:400;transform:scale(0.8538,0.9417);transform-origin:0 0;-webkit-text-stroke:0.12px #333;">テーブルとして書式設定</div>
<div class="t" style="left:710.03px;top:123.98px;font-size:12px;color:#333;font-weight:400;transform:scale(0.7747,1.0182);transform-origin:0 0;-webkit-text-stroke:0.12px #333;">セルのスタイル</div>
<div class="t" style="left:879.80px;top:78.35px;font-size:12px;color:#333;font-weight:400;transform:scale(1.0609,0.9917);transform-origin:0 0;-webkit-text-stroke:0.12px #333;">挿入</div>
<div class="t" style="left:879.80px;top:101.45px;font-size:12px;color:#333;font-weight:400;transform:scale(1.0609,0.9917);transform-origin:0 0;-webkit-text-stroke:0.12px #333;">削除</div>
<div class="t" style="left:878.74px;top:125.00px;font-size:12px;color:#333;font-weight:400;transform:scale(1.0609,1.0182);transform-origin:0 0;-webkit-text-stroke:0.12px #333;">書式</div>
<div class="t" style="left:1003.00px;top:76.50px;font-size:7px;color:#3c74bd;font-weight:700;transform:scale(1.2000,1.0000);transform-origin:0 0;">A</div>
<div class="t" style="left:1003.50px;top:83.00px;font-size:7px;color:#8a58b0;font-weight:700;transform:scale(1.3750,1.0000);transform-origin:0 0;">Z</div>
<div class="t" style="left:1062.63px;top:112.38px;font-size:12px;color:#333;font-weight:400;transform:scale(0.8714,0.9200);transform-origin:0 0;-webkit-text-stroke:0.12px #333;">アド</div>
<div class="t" style="left:1062.67px;top:127.48px;font-size:12px;color:#333;font-weight:400;transform:scale(0.8318,0.9200);transform-origin:0 0;-webkit-text-stroke:0.12px #333;">イン</div>
<div class="t" style="left:1134.57px;top:112.28px;font-size:12px;color:#333;font-weight:400;transform:scale(1.0261,1.0222);transform-origin:0 0;">PDF</div>
<div class="t" style="left:1129.64px;top:128.40px;font-size:12px;color:#333;font-weight:400;transform:scale(0.9629,0.7667);transform-origin:0 0;-webkit-text-stroke:0.12px #333;">を作成</div>
<svg style="left:0;top:0" width="1252" height="682"><polygon points="114.8,186.3 120.2,186.3 117.5,189" fill="#555"/><circle cx="141.3" cy="182.8" r="0.9" fill="#999"/><circle cx="141.3" cy="187" r="0.9" fill="#999"/><circle cx="141.3" cy="191.2" r="0.9" fill="#999"/><path d="M168.8 183 L179.4 192.6 M179.4 183 L168.8 192.6" stroke="#b5b5b5" stroke-width="1.3"/><path d="M204 188 L208.2 192.4 L217 183.2" fill="none" stroke="#b5b5b5" stroke-width="1.6"/><polyline points="1230.8,185.3 1234.15,188.8 1237.5,185.3" fill="none" stroke="#555" stroke-width="1.9"/></svg>
<svg style="left:0;top:0" width="1252" height="682"><polygon points="33.4,639.8 33.4,647 29,643.4" fill="#bdbdbd"/><polygon points="53.7,639.8 53.7,647 58.3,643.4" fill="#bdbdbd"/><rect x="94.3" y="633.4" width="1" height="18.3" fill="#a6a6a6"/><rect x="165.0" y="633.4" width="1" height="18.3" fill="#a6a6a6"/><rect x="235.3" y="633.4" width="1" height="18.3" fill="#a6a6a6"/><rect x="306" y="628.5" width="70" height="24" fill="#fff"/><rect x="306" y="651.2" width="70" height="2" fill="#217346"/><rect x="305.5" y="630" width="1" height="22" fill="#c8c8c8"/><rect x="375.5" y="630" width="1" height="22" fill="#c8c8c8"/><circle cx="414.6" cy="643.5" r="7.6" fill="none" stroke="#777" stroke-width="1.1"/><path d="M410.3 643.5 H418.9 M414.6 639.2 V647.8" stroke="#555" stroke-width="1.2"/><circle cx="750.4" cy="638.6" r="0.9" fill="#aaa"/><circle cx="750.4" cy="643.2" r="0.9" fill="#aaa"/><circle cx="750.4" cy="647.8" r="0.9" fill="#aaa"/><rect x="765.5" y="635.5" width="15" height="15" fill="#fff" stroke="#a8a8a8" stroke-width="1"/><polygon points="774.7,639.7 774.7,647 770.4,643.35" fill="#111"/><rect x="780.5" y="635.5" width="377" height="15" fill="#fff" stroke="#a8a8a8" stroke-width="1"/><rect x="1212.5" y="635.8" width="14.4" height="14.7" fill="#fff" stroke="#c2c2c2" stroke-width="1"/><polygon points="1218,639.7 1218,647 1222.3,643.35" fill="#111"/><polygon points="1233.7,222 1241.1,222 1237.4,217.8" fill="#111"/><polygon points="1233.5,621.9 1241.2,621.9 1237.35,626" fill="#111"/><rect x="86" y="661.5" width="11.6" height="11" fill="#fff" stroke="#666" stroke-width="1"/><rect x="86" y="661" width="11.6" height="3" fill="#666"/><circle cx="88" cy="661.5" r="2" fill="#666"/><path d="M88 666.5 H96 M88 669 H96 M90 664.5 V672 M92.6 664.5 V672 M95 664.5 V672" stroke="#888" stroke-width="0.6"/><path d="M124.5 661.8 A6 6 0 1 0 120.5 673" fill="none" stroke="#555" stroke-width="1.1"/><path d="M122.5 664 L124.5 667.5 H127.5" fill="none" stroke="#555" stroke-width="1.1"/><path d="M125.5 667.5 L131.5 673.8 M131.5 667.5 L125.5 673.8" stroke="#333" stroke-width="1.4"/><rect x="844.8" y="660" width="14.8" height="10" rx="1" fill="#444"/><rect x="844.8" y="671.4" width="5" height="1.2" fill="#444"/><circle cx="855" cy="670" r="4" fill="#444" stroke="#f3f3f3" stroke-width="1"/><circle cx="855" cy="670" r="1.4" fill="#f3f3f3"/><rect x="929.8" y="656" width="39" height="20" fill="#c8c8c8"/><rect x="943.3" y="660.3" width="12.3" height="12.3" fill="none" stroke="#666" stroke-width="1"/><path d="M947.4 660.3 V672.6 M951.5 660.3 V672.6 M943.3 664.4 H955.6 M943.3 668.5 H955.6" stroke="#666" stroke-width="0.9"/><rect x="982.2" y="660.3" width="13" height="12.3" fill="none" stroke="#666" stroke-width="1"/><rect x="985" y="663" width="7.4" height="7" fill="none" stroke="#777" stroke-width="0.9"/><path d="M986.5 665 H991 M986.5 667 H991" stroke="#888" stroke-width="0.7"/><rect x="1022.3" y="660.3" width="13" height="12.3" fill="none" stroke="#666" stroke-width="1"/><path d="M1026.5 660.3 V666.5 H1030 V660.3" fill="none" stroke="#666" stroke-width="0.9"/><path d="M1055 666.6 H1062.2" stroke="#444" stroke-width="1.1"/><path d="M1068 666.8 H1168" stroke="#777" stroke-width="1.2"/><path d="M1117.6 664.5 V669.5" stroke="#555" stroke-width="1"/><rect x="1130.2" y="661" width="4.6" height="11" fill="#444"/><path d="M1172.5 666.6 H1180.4 M1176.45 662.7 V670.5" stroke="#444" stroke-width="1.1"/></svg>
<div class="t" style="left:104.52px;top:634.82px;font-size:14px;color:#555;font-weight:400;transform:scale(1.0837,1.0273);transform-origin:0 0;">Sheet1</div>
<div class="t" style="left:174.89px;top:634.82px;font-size:14px;color:#555;font-weight:400;transform:scale(1.1070,1.0273);transform-origin:0 0;">Sheet2</div>
<div class="t" style="left:245.90px;top:634.82px;font-size:14px;color:#555;font-weight:400;transform:scale(1.1000,1.0273);transform-origin:0 0;">Sheet3</div>
<div class="t" style="left:316.19px;top:634.82px;font-size:14px;color:#217346;font-weight:400;transform:scale(1.1070,1.0273);transform-origin:0 0;">Sheet4</div>
<div class="t" style="left:16.20px;top:661.40px;font-size:12px;color:#333;font-weight:400;transform:scale(1.0457,1.0182);transform-origin:0 0;-webkit-text-stroke:0.12px #333;">準備完了</div>
<div class="t" style="left:133.52px;top:661.70px;font-size:12px;color:#262626;font-weight:700;transform:scale(0.8839,0.9167);transform-origin:0 0;-webkit-text-stroke:0.35px #262626">アクセシビリティ: 検討が必要です</div>
<div class="t" style="left:860.25px;top:660.80px;font-size:12px;color:#333;font-weight:400;transform:scale(1.0500,1.0000);transform-origin:0 0;-webkit-text-stroke:0.12px #333;">表示設定</div>
<div class="t" style="left:1192.84px;top:661.15px;font-size:12px;color:#444;font-weight:400;transform:scale(1.1552,1.1000);transform-origin:0 0;">190%</div>
<svg style="left:0;top:0" width="1252" height="682"><path d="M682.8 57.4 C682.8 54.8 679.5 53.4 679.5 50.9 A5.25 5.25 0 0 1 690 50.9 C690 53.4 686.7 54.8 686.7 57.4 Z" fill="none" stroke="#fff" stroke-width="1.2"/><path d="M682.9 59.2 H686.6 M683.3 61.3 H686.2" stroke="#fff" stroke-width="1.2"/></svg>
<div class="a" style="left:1226.5px;top:256px;width:1px;height:374px;background:#cfcfcf;"></div>
<svg style="left:0;top:0" width="1252" height="682"><path d="M252 180.6 C250 179.2 248 180 247.2 182.8 L244.6 191.6 C244 193.8 242 194.6 240 193.4" fill="none" stroke="#4a4a4a" stroke-width="1.5"/><path d="M243.6 184.6 H249.2" stroke="#4a4a4a" stroke-width="1.1"/><path d="M247 186.6 C248.5 186.4 249 188 249.6 190 C250 191.4 250.6 191.6 251.8 191" fill="none" stroke="#4a4a4a" stroke-width="1.1"/><path d="M252 186.8 C250.5 187.2 249 189.5 246.5 191.6" fill="none" stroke="#4a4a4a" stroke-width="1.1"/></svg>
<div class="a" style="left:4px;top:69px;width:1px;height:608px;background:#4f8d68;"></div>
<div class="a" style="left:1247px;top:69px;width:1px;height:608px;background:#4f8d68;"></div>
<div class="a" style="left:4px;top:676px;width:1244px;height:1px;background:#4f8d68;"></div>
</div></div>
</body></html>
